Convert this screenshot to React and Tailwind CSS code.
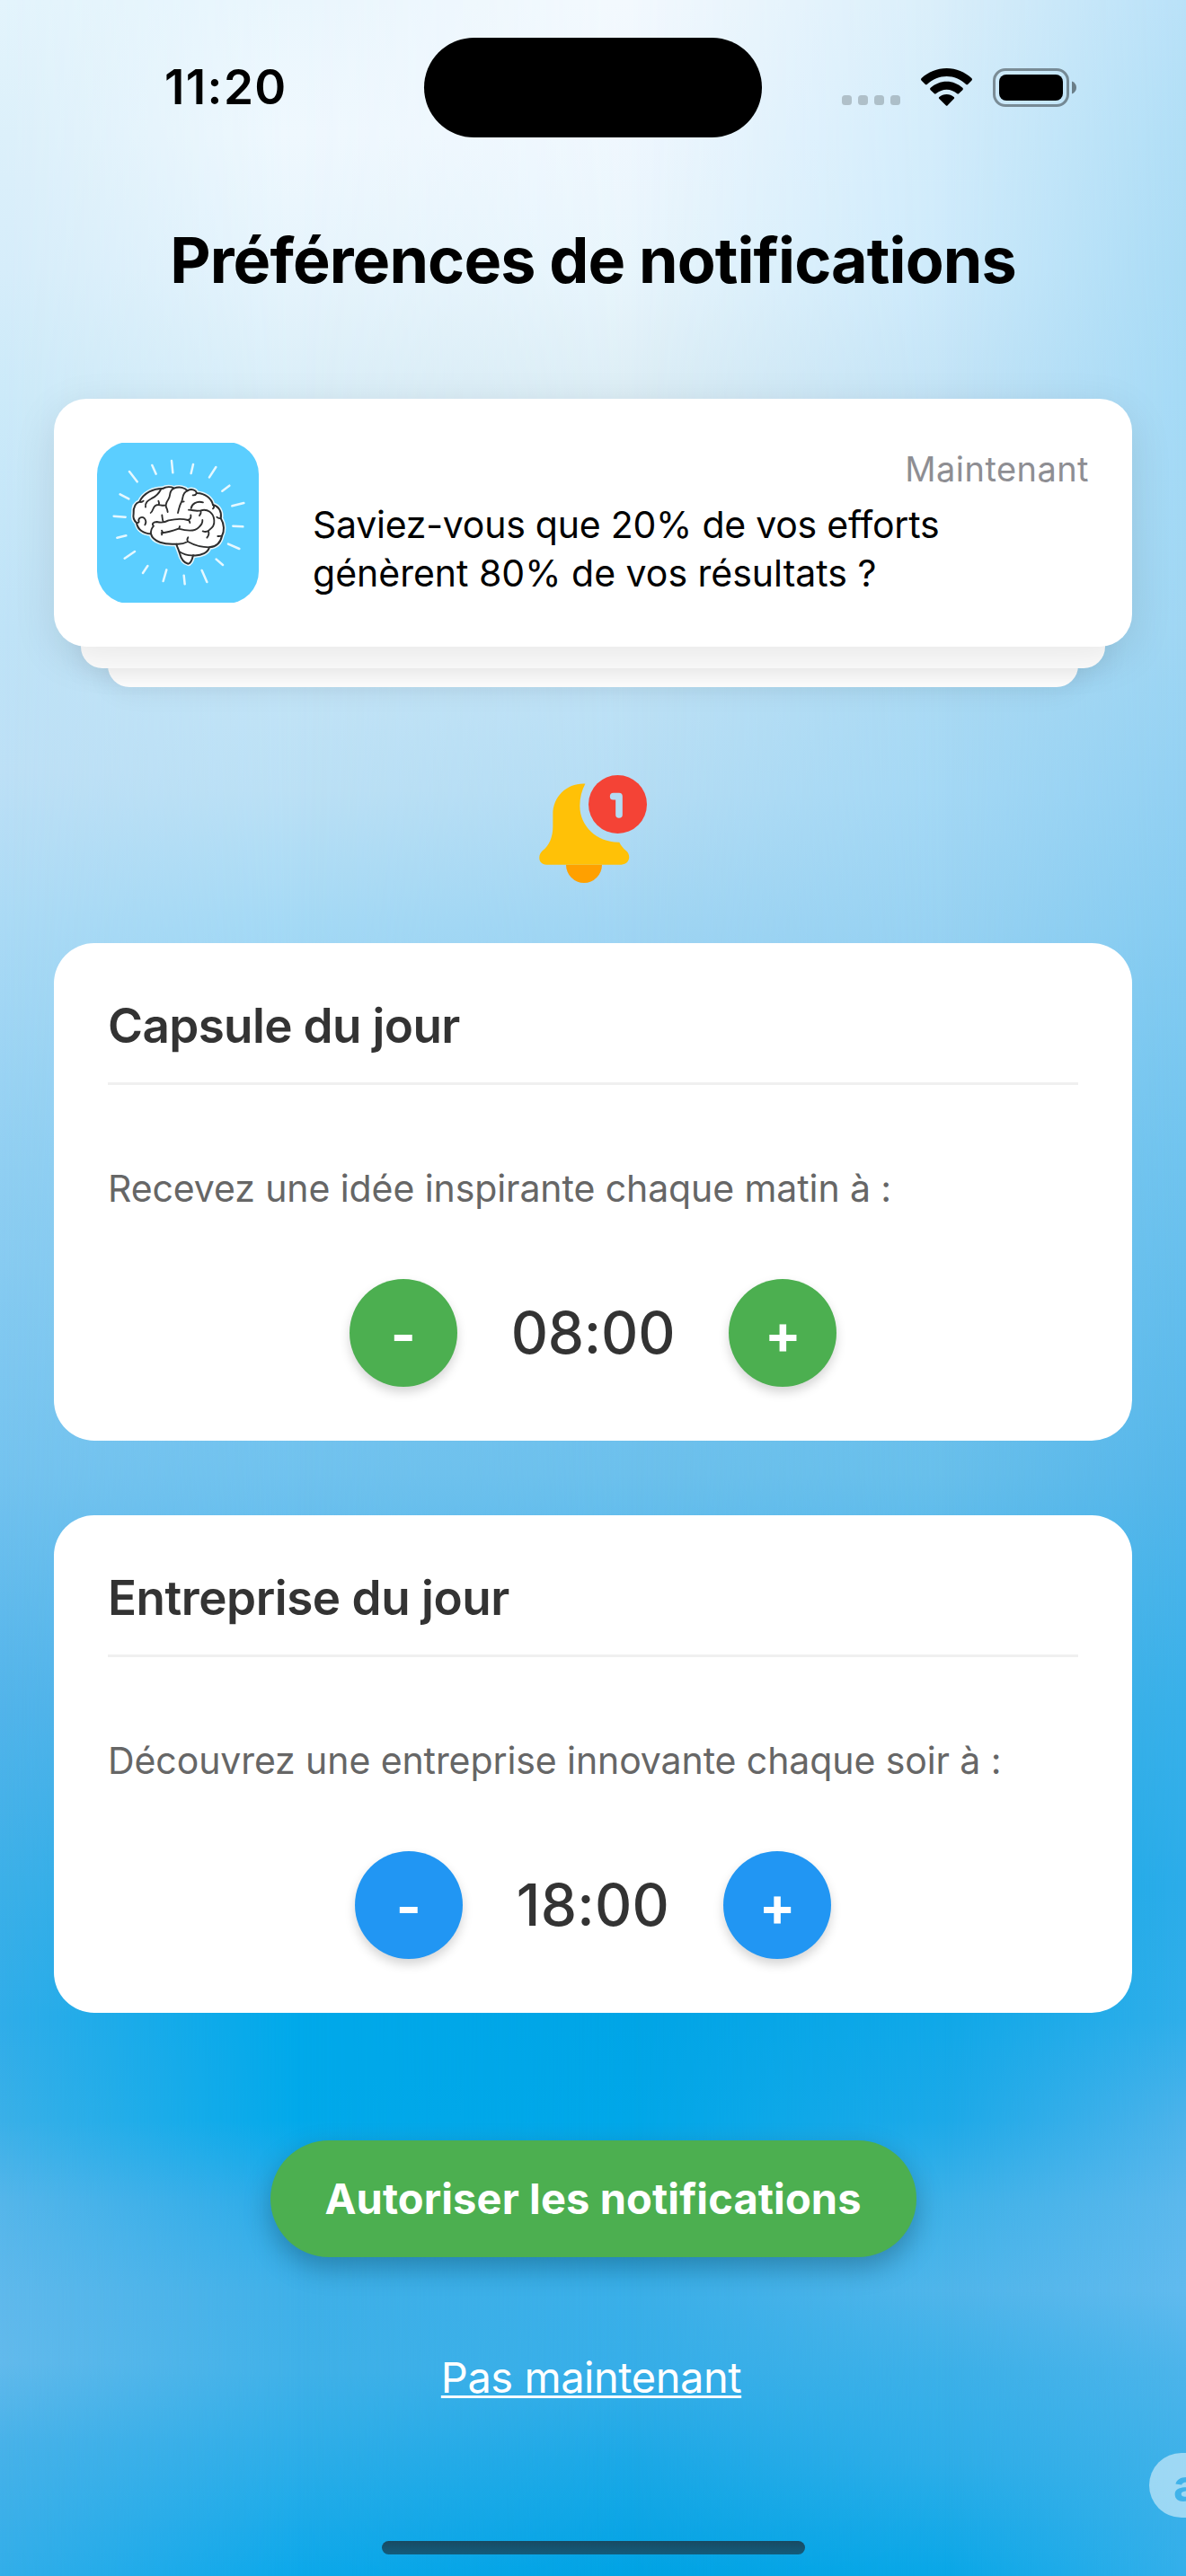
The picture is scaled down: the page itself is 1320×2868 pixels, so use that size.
const PAGE_FONT = "font-['Inter','Liberation_Sans',sans-serif]";

/* Soft sky gradient: vertical colour ramps that fade into each other from left to right. */
function SkyBackground() {
  return (
    <div aria-hidden="true" className="absolute inset-0 -z-10">
      <div className="absolute inset-0 bg-[linear-gradient(to_bottom,#e3f4fc_0px,#dcf0fa_150px,#d6edfa_300px,#cceaf9_440px,#bfe3f7_700px,#bde0f6_860px,#aadaf5_1030px,#90cff2_1300px,#74c3ef_1640px,#52b4ea_1900px,#3cb0e8_2100px,#30ade9_2250px,#3ab0e8_2360px,#55b6ea_2450px,#5fb9ec_2550px,#62baec_2630px,#48b2e9_2720px,#32aee9_2868px)]" />
      <div className="absolute inset-0 bg-[linear-gradient(to_bottom,#eaf6fd_0px,#eff8fe_150px,#e6f4fc_300px,#daeef8_440px,#c5e5f7_700px,#bbe0f5_880px,#a4d9f5_1030px,#88ccf0_1300px,#70c2ee_1640px,#48b2ea_1900px,#1ca9e8_2100px,#00a9ea_2250px,#02a9ea_2360px,#2aabe8_2450px,#3fb0e8_2550px,#40b1e8_2640px,#2cade8_2740px,#0ca8ea_2868px)] [mask-image:linear-gradient(to_right,transparent_0px,black_330px)]" />
      <div className="absolute inset-0 bg-[linear-gradient(to_bottom,#f3f9fe_0px,#eff7fe_150px,#e8f5fc_300px,#dcedf5_440px,#c2e3f6_700px,#b5ddf4_880px,#a0d5f3_1030px,#82c9f0_1300px,#6cc0ec_1640px,#3fb0ea_1900px,#08a8e9_2100px,#00a5e6_2250px,#00a7e8_2360px,#20aae8_2450px,#3aafe8_2550px,#36aee8_2640px,#1ba8e6_2740px,#00a3e4_2868px)] [mask-image:linear-gradient(to_right,transparent_330px,black_700px)]" />
      <div className="absolute inset-0 bg-[linear-gradient(to_bottom,#d9eefa_0px,#d2ecfb_150px,#cdeafb_300px,#c2e3f6_440px,#addaf2_700px,#a4d8f5_880px,#98d2f2_1030px,#78c6ef_1300px,#68bfeb_1640px,#3cafe9_1900px,#12a9e9_2100px,#10a8e8_2250px,#1ca9e8_2360px,#3db1e8_2450px,#4fb5ea_2550px,#3cb0e8_2640px,#2eade8_2740px,#08a7e7_2868px)] [mask-image:linear-gradient(to_right,transparent_700px,black_1050px)]" />
      <div className="absolute inset-0 bg-[linear-gradient(to_bottom,#b9e1f8_0px,#b0def6_150px,#a9dbf5_300px,#a5daf6_440px,#9fd6f3_700px,#92d0f2_880px,#86ccf1_1030px,#6fc3ee_1300px,#55b6ea_1640px,#38b0e8_1900px,#2cace8_2100px,#30aee9_2250px,#4cb3ea_2360px,#5cb8ec_2450px,#60baee_2550px,#4cb4ea_2640px,#3eb1e8_2740px,#34afea_2868px)] [mask-image:linear-gradient(to_right,transparent_1050px,black_1320px)]" />
    </div>
  );
}

function SignalIcon() {
  return (
    <svg className="mt-[29px] h-[11px] w-[65px]" viewBox="0 0 65 11" fill="#000" fillOpacity="0.2">
      <rect x="0" width="11" height="11" rx="3.5" />
      <rect x="18" width="11" height="11" rx="3.5" />
      <rect x="36" width="11" height="11" rx="3.5" />
      <rect x="54" width="11" height="11" rx="3.5" />
    </svg>
  );
}

function WifiIcon() {
  return (
    <svg className="ml-[23px] h-[42px] w-[57px]" viewBox="0 0 171 126">
      <path d="M86 0C118 0 147 13 169 33Q173 37 169 41L157 53Q154 56 150 53C132 36 110 27 86 27S39 36 21 53Q17 56 14 53L2 41Q-2 37 2 33C24 13 54 0 86 0Z" />
      <path d="M86 44C106 44 124 52 139 65Q143 69 139 73L127 84Q124 87 120 84C110 76 99 71 86 71S61 76 51 84Q47 87 44 84L32 73Q28 69 32 65C47 52 65 44 86 44Z" />
      <path d="M86 87C95 87 103 91 110 96Q113 99 110 102L89 124Q86 127 83 124L61 102Q58 99 61 96C68 91 76 87 86 87Z" />
    </svg>
  );
}

function BatteryIcon() {
  return (
    <svg className="ml-[23px] h-[43px] w-[94px]" viewBox="0 0 94 43">
      <rect x="1.5" y="1.5" width="82" height="40" rx="12.5" fill="none" stroke="#000" strokeOpacity="0.4" strokeWidth="3" />
      <rect x="7" y="7" width="71" height="29" rx="8" />
      <path d="M88 14.5C91 15.7 93 18 93 21.500S91 27.300 88 28.500Z" fillOpacity="0.45" />
    </svg>
  );
}

function StatusBar() {
  return (
    <div className="flex h-[194px] items-center">
      <div className="w-[472px] pl-[183px] text-[53px] font-semibold leading-none tracking-[1.4px]">11:20</div>
      <div className="h-[111px] w-[376px] rounded-full bg-black" />
      <div className="flex items-center pl-[89px]">
        <SignalIcon />
        <WifiIcon />
        <BatteryIcon />
      </div>
    </div>
  );
}

function BrainIcon() {
  return (
    <svg className="h-[178px] w-[180px] shrink-0" viewBox="24 39 540 534" strokeLinecap="round" strokeLinejoin="round">
      <defs>
        <path
          id="brain"
          d="M146 275C145 252 153 240 166 236C180 206 214 191 243 192C256 185 272 186 281 191C299 184 318 189 326 199C340 191 354 197 357 207C386 208 406 225 411 246C432 252 441 270 437 291C450 311 449 336 441 350C436 373 425 386 399 388C395 405 374 417 345 415C341 432 336 443 328 443C313 440 303 421 299 405C296 395 291 386 289 377C250 380 210 370 204 343C180 343 159 329 156 306C146 298 144 286 146 275Z"
        />
      </defs>
      <rect x="24" y="36" width="540" height="540" rx="108" fill="#5bceff" />
      <g stroke="#e6f8ff" strokeWidth="7.500">
        <path d="M132 135L158 169M208 114L221 143M273 99L277 139M345 111L338 141M421 120L399 154M466 182L442 200M514 240L475 250M511 319L478 317M499 393L462 377M444 447L422 428M391 504L374 465M317 511L314 482M245 501L256 463M177 474L193 450M116 425L150 402M91 356L121 349M80 284L119 287M101 211L130 226" />
      </g>
      <use href="#brain" fill="#fff" stroke="#e9f8ff" strokeWidth="15" />
      <use href="#brain" fill="#fff" stroke="#2d2d2d" strokeWidth="6" />
      <g fill="none" stroke="#2d2d2d" strokeWidth="5.500">
        <path d="M166 236C171 238 175 237 179 233M186 254C184 236 196 231 208 224C224 216 231 207 237 195" />
        <path d="M203 273C211 270 209 254 220 248C230 242 236 250 251 248M230 247C232 241 232 238 229 233" />
        <path d="M281 191C262 199 272 214 262 228C254 239 250 249 258 261L260 270" />
        <path d="M326 199C306 207 313 224 306 236C299 248 298 258 294 273M314 235C311 236 309 236 306 236" />
        <path d="M357 207C354 213 349 215 344 214M338 258C340 244 356 232 378 238" />
        <path d="M330 263C346 263 352 269 370 265C393 258 413 273 415 297C417 315 410 321 397 332C390 338 384 337 377 334M371 265C372 274 369 279 366 282M396 335C399 343 396 350 391 356" />
        <path d="M411 246C416 251 415 256 411 259M437 291C432 292 427 290 424 287" />
        <path d="M164 303C159 291 173 283 182 291C188 298 188 306 184 313M156 306C159 307 162 306 164 303" />
        <path d="M204 343C203 330 209 321 213 317C205 309 213 303 224 303C246 308 256 302 263 298C285 293 307 291 327 297C336 295 338 287 337 280M241 280C242 291 242 298 246 304M327 297C333 299 334 302 334 306" />
        <path d="M239 340C263 338 283 331 296 326C318 332 349 337 363 322C373 313 377 306 376 297M240 332C244 337 244 341 240 346M296 326C300 323 300 321 300 318" />
        <path d="M289 377C304 378 318 374 327 369C345 379 375 388 399 388M327 369C323 363 326 358 328 355M441 350C437 350 432 351 427 351" />
        <path d="M299 403C312 411 329 416 345 415" />
      </g>
    </svg>
  );
}

function BellIcon() {
  return (
    <svg className="size-[120px]" viewBox="120 69 360 360">
      <path d="M210 368A60 61 0 0 0 330 368Z" fill="#ffa000" />
      <path
        d="M274 98C214 95 166 140 166 200V240C166 276 154 304 131 322C114 338 118 368 145 368H395C421 368 429 338 411 322C401 313 393 304 388 293C314 295 256 240 256 172C256 145 262 120 274 98Z"
        fill="#ffc107"
      />
      <circle cx="382.500" cy="166.500" r="97.500" fill="#f44336" />
      <path d="M368 140H387V201" fill="none" stroke="#b4dcf3" strokeWidth="23" strokeLinecap="round" strokeLinejoin="round" />
    </svg>
  );
}

function NotificationPreview() {
  return (
    <div className="mx-[60px] mt-[112px]">
      <div className="relative z-20 flex h-[276px] items-center rounded-[36px] bg-white px-12 shadow-[0_12px_48px_rgba(0,0,0,0.1)]">
        <BrainIcon />
        <div className="ml-[60px] flex grow flex-col gap-3">
          <div className="text-right text-[38px] leading-[46px] tracking-[0.45px] text-[#8e8e93]">Maintenant</div>
          <div className="text-[41px] leading-[54px]">
            <p className="tracking-[-0.24px]">Saviez-vous que 20% de vos efforts</p>
            <p>génèrent 80% de vos résultats ?</p>
          </div>
        </div>
      </div>
      <div className="relative z-10 mx-[30px] -mt-6 h-12 rounded-b-3xl bg-white shadow-[0_6px_30px_rgba(0,0,0,0.08)]" />
      <div className="mx-[60px] -mt-6 h-[45px] rounded-b-3xl bg-white shadow-[0_6px_30px_rgba(0,0,0,0.06)]" />
    </div>
  );
}

function RoundButton({ color, label, children }) {
  return (
    <button
      aria-label={label}
      className={`flex size-[120px] items-center justify-center rounded-full pt-0.5 text-[60px] font-bold leading-none text-white shadow-[0_6px_12px_rgba(0,0,0,0.17)] ${color}`}
    >
      {children}
    </button>
  );
}

function ScheduleCard({ title, titleSpacing, description, time, timeSpacing, color }) {
  return (
    <section className="mx-[60px] rounded-[45px] bg-white p-[60px]">
      <h2 className={`border-b-[3px] border-[#f0f0f0] pb-[30px] text-[53px] font-semibold leading-[65px] text-[#333] ${titleSpacing}`}>
        {title}
      </h2>
      <p className="mt-[90px] text-[41px] leading-[50px] tracking-[-0.09px] text-[#666]">{description}</p>
      <div className="mt-[76px] flex items-center justify-center">
        <RoundButton color={color} label="Plus tôt">-</RoundButton>
        <span className={`mx-[60px] text-[64px] font-medium leading-[78px] text-[#333] ${timeSpacing}`}>{time}</span>
        <RoundButton color={color} label="Plus tard">+</RoundButton>
      </div>
    </section>
  );
}

export default function App() {
  return (
    <main className={`relative isolate flex h-[2868px] w-[1320px] flex-col overflow-hidden text-black ${PAGE_FONT}`}>
      <SkyBackground />
      <StatusBar />
      <h1 className="mt-[54px] text-center text-[70px] font-bold leading-[84px] tracking-[-0.89px]">
        Préférences de notifications
      </h1>
      <NotificationPreview />
      <div className="mt-[98px] flex justify-center">
        <BellIcon />
      </div>
      <div className="mt-[67px] flex flex-col gap-[83px]">
        <ScheduleCard
          title="Capsule du jour"
          titleSpacing="tracking-[-0.64px]"
          description="Recevez une idée inspirante chaque matin à :"
          time="08:00"
          timeSpacing="tracking-[-0.2px]"
          color="bg-[#4caf50]"
        />
        <ScheduleCard
          title="Entreprise du jour"
          titleSpacing="tracking-[-0.47px]"
          description="Découvrez une entreprise innovante chaque soir à :"
          time="18:00"
          timeSpacing="tracking-[0.3px]"
          color="bg-[#2196f3]"
        />
      </div>
      <div className="mt-[142px] flex flex-col items-center">
        <button className="h-[130px] w-[719px] rounded-full bg-[#4caf50] text-[47px] font-bold tracking-[0.1px] text-white shadow-[0_12px_30px_rgba(0,0,0,0.25)]">
          Autoriser les notifications
        </button>
        <button className="mr-1 mt-[105px] text-[47px] leading-[58px] tracking-[-0.46px] text-white underline decoration-[3px] underline-offset-[3px]">
          Pas maintenant
        </button>
        <div className="mt-[153px] h-[15px] w-[471px] rounded-full bg-linear-to-b from-[#184a62] to-[#125c7c]" />
      </div>
      <div className="absolute left-[1279px] top-[2731px] h-[72px] w-[120px] rounded-full bg-white/50 pl-[27px] text-[50px] font-bold leading-[72px] text-[#40b3ea]">
        a
      </div>
    </main>
  );
}
